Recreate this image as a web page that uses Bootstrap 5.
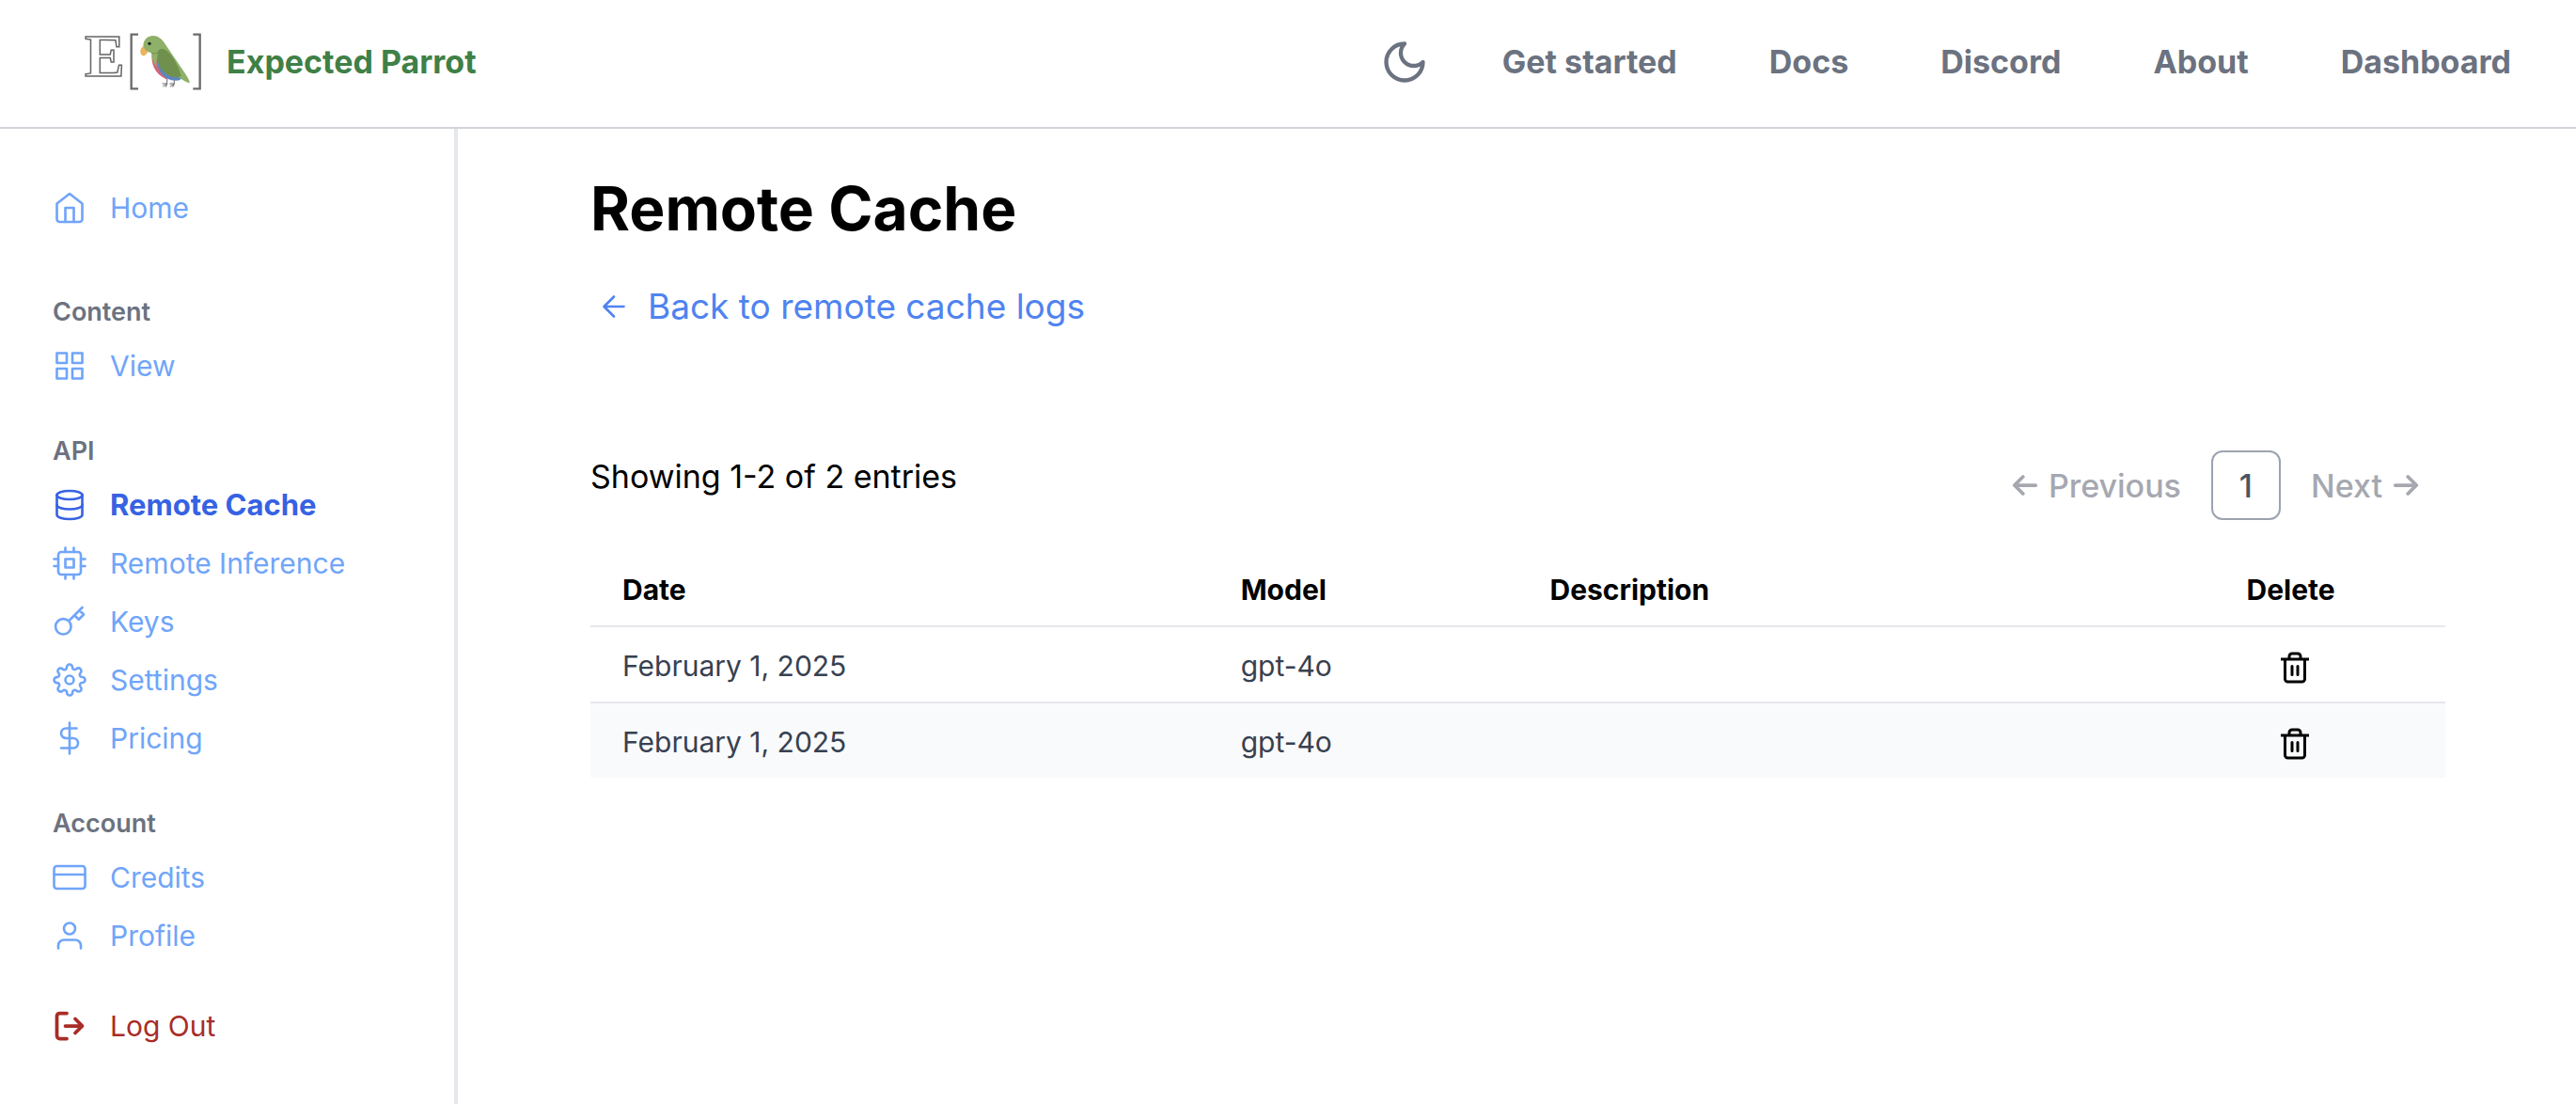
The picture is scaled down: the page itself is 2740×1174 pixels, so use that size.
<!DOCTYPE html>
<html lang="en">
<head>
<meta charset="utf-8">
<meta name="viewport" content="width=device-width, initial-scale=1">
<title>Remote Cache - Expected Parrot</title>
<link href="https://cdn.jsdelivr.net/npm/bootstrap@5.3.0/dist/css/bootstrap.min.css" rel="stylesheet">
<style>
  body { font-family: Inter, "Liberation Sans", sans-serif; color: #000; background: #fff; min-height: 100vh; }
  a { text-decoration: none; }
  .ico { width: 36px; height: 36px; flex: none; fill: none; stroke: currentColor; stroke-width: 1.75; stroke-linecap: round; stroke-linejoin: round; }
  .site-header { height: 137px; border-bottom: 2px solid #d1d5db; padding: 0 69px 4px 90px; }
  .brand-link { color: #3f8046; font-size: 34px; font-weight: 700; gap: 27px; }
  .brand-logo { width: 124px; height: 88px; flex: none; }
  .top-links { gap: 98px; font-size: 34px; font-weight: 700; }
  .top-links a { color: #6b7280; }
  .theme-btn { color: #6b7280; margin-right: -20px; }
  .theme-btn .ico { width: 52px; height: 52px; stroke-width: 2; }
  .side { width: 487px; flex: none; border-right: 4px solid #e5e7eb; padding: 53px 32px 32px 56px; }
  .side a, .side button { display: flex; align-items: center; gap: 25px; height: 62px; font-size: 30px; line-height: 40px; color: #70a5f9; }
  .side h2 { font-size: 27px; line-height: 32px; font-weight: 600; color: #6b7280; margin: 44px 0 10px; }
  .side h2.first-group { margin-top: 64px; }
  .side a.current { color: #3662e3; font-weight: 700; font-size: 31px; }
  .side .logout { color: #a82c27; margin-top: 34px; }
  .side .logout .ico { stroke-width: 2.5; }
  .main-area { padding: 49px 139px 48px 141px; }
  .main-area h1 { font-size: 64px; line-height: 72px; font-weight: 700; margin: 0; }
  .back-link { color: #4f83f0; font-size: 37px; line-height: 48px; margin: 44px 0 0 7px; gap: 18px; }
  .list-head { margin-top: 129px; }
  .entry-count { font-size: 34px; line-height: 56px; }
  .pager { font-size: 34px; font-weight: 500; gap: 32px; color: #a5a8b0; margin-right: 24px; }
  .pager button { color: #a5a8b0; gap: 7px; }
  .pager .ico { stroke-width: 2.5; }
  .pager .page-now { width: 74px; height: 74px; border: 2px solid #9ca3af; border-radius: 12px; color: #4b5563; }
  .entries { margin: 34px 0 0; font-size: 30px; line-height: 40px; table-layout: fixed; width: 100%; }
  .entries th { padding: 20px 34px 18px; border-bottom: 2px solid #e5e7eb; font-weight: 700; }
  .entries td { padding: 21px 34px 18px; color: #374151; }
  .entries tbody tr + tr td { border-top: 2px solid #e5e7eb; background: #f9fafb; }
  .w-third { width: 33.333%; } .w-sixth { width: 16.667%; }
  .plain-btn { background: none; border: 0; padding: 0; font-weight: inherit; }
  .del-btn { display: block; height: 40px; margin: 0 auto; padding: 4px 0 0 8px; color: #000; }
  .del-btn .ico { display: block; stroke-width: 2; stroke-linecap: butt; }
</style>
</head>
<body class="d-flex flex-column">
<header class="site-header d-flex align-items-center justify-content-between">
  <a class="brand-link d-flex align-items-center" href="#">
    <svg class="brand-logo" viewBox="0 -12 124 88" aria-hidden="true">
      <text x="0" y="47" font-family="Liberation Serif, serif" font-size="64" fill="none" stroke="#666" stroke-width="1.5">E</text>
      <g transform="translate(-6 -6) scale(.3333)" fill="none">
        <path d="M189 26H167V199H189M364 26H386V199H364" stroke="#6b6b6b" stroke-width="7"/>
        <path d="M281 168V184L268 192M281 184L277 194M266 183H281M304 168V184L291 192M304 184L299 194M289 183H304" stroke="#666" stroke-width="3"/>
        <path d="M233 84C229 118 240 150 277 168L300 165L262 84Z" fill="#d2647a"/>
        <path d="M251 98C244 138 272 180 322 172L330 160L262 84Z" fill="#5b87c0"/>
        <path d="M212 60C198 64 192 78 199 90C202 95 208 95 211 92C216 86 222 86 220 72Z" fill="#e9b45c"/>
        <path d="M205 60C207 41 220 30 236 30C257 30 268 45 279 62L310 108L333 142C343 157 351 169 354 180C347 181 337 175 326 168L300 145L252 95C248 105 246 113 248 130C238 119 232 104 232 85C221 83 208 76 205 60Z" fill="#8fb068"/>
        <path d="M251 84C252 73 264 68 277 76C298 90 317 124 326 158C311 167 287 162 270 145C255 130 248 108 251 84Z" fill="#70914d"/>
        <path d="M230 84Q241 91 252 83" stroke="#70914d" stroke-width="3"/>
        <circle cx="225" cy="55" r="5" fill="#222"/>
      </g>
    </svg>
    <span>Expected Parrot</span>
  </a>
  <nav class="top-links d-flex align-items-center">
    <button class="plain-btn theme-btn d-flex" type="button" aria-label="Dark mode"><svg class="ico" viewBox="0 0 24 24"><path d="M12 3a6 6 0 0 0 9 9 9 9 0 1 1-9-9Z"/></svg></button>
    <a href="#">Get started</a><a href="#">Docs</a><a href="#">Discord</a><a href="#">About</a><a href="#">Dashboard</a>
  </nav>
</header>
<div class="d-flex flex-grow-1">
  <aside class="side">
    <a href="#"><svg class="ico" viewBox="0 0 24 24"><path d="M3 9l9-7 9 7v11a2 2 0 0 1-2 2H5a2 2 0 0 1-2-2z"/><path d="M9 22V12h6v10"/></svg>Home</a>
    <h2 class="first-group">Content</h2>
    <a href="#"><svg class="ico" viewBox="0 0 24 24"><path d="M3 3h7v7H3zM14 3h7v7h-7zM14 14h7v7h-7zM3 14h7v7H3z"/></svg>View</a>
    <h2>API</h2>
    <a class="current" href="#"><svg class="ico" viewBox="0 0 24 24"><ellipse cx="12" cy="5" rx="9" ry="3"/><path d="M21 12c0 1.660-4 3-9 3s-9-1.340-9-3"/><path d="M3 5v14c0 1.660 4 3 9 3s9-1.340 9-3V5"/></svg>Remote Cache</a>
    <a href="#"><svg class="ico" viewBox="0 0 24 24"><rect x="4" y="4" width="16" height="16" rx="2"/><path d="M9 9h6v6H9zM9 1v3M15 1v3M9 20v3M15 20v3M20 9h3M20 14h3M1 9h3M1 14h3"/></svg>Remote Inference</a>
    <a href="#"><svg class="ico" viewBox="0 0 24 24"><path d="M21 2l-2 2m-7.610 7.610a5.500 5.500 0 1 1-7.778 7.778 5.500 5.500 0 0 1 7.777-7.777zm0 0L15.500 7.500m0 0l3 3L22 7l-3-3m-3.500 3.500L19 4"/></svg>Keys</a>
    <a href="#"><svg class="ico" viewBox="0 0 24 24"><circle cx="12" cy="12" r="3"/><path d="M19.400 15a1.650 1.650 0 0 0 .33 1.820l.06.06a2 2 0 0 1 0 2.830 2 2 0 0 1-2.830 0l-.06-.06a1.650 1.650 0 0 0-1.820-.33 1.650 1.650 0 0 0-1 1.510V21a2 2 0 0 1-2 2 2 2 0 0 1-2-2v-.09A1.650 1.650 0 0 0 9 19.400a1.650 1.650 0 0 0-1.820.33l-.06.06a2 2 0 0 1-2.830 0 2 2 0 0 1 0-2.830l.06-.06a1.650 1.650 0 0 0 .33-1.820 1.650 1.650 0 0 0-1.510-1H3a2 2 0 0 1-2-2 2 2 0 0 1 2-2h.09A1.650 1.650 0 0 0 4.600 9a1.650 1.650 0 0 0-.33-1.820l-.06-.06a2 2 0 0 1 0-2.830 2 2 0 0 1 2.830 0l.06.06a1.650 1.650 0 0 0 1.820.33H9a1.650 1.650 0 0 0 1-1.510V3a2 2 0 0 1 2-2 2 2 0 0 1 2 2v.09a1.650 1.650 0 0 0 1 1.510 1.650 1.650 0 0 0 1.820-.33l.06-.06a2 2 0 0 1 2.830 0 2 2 0 0 1 0 2.830l-.06.06a1.650 1.650 0 0 0-.33 1.820V9a1.650 1.650 0 0 0 1.510 1H21a2 2 0 0 1 2 2 2 2 0 0 1-2 2h-.09a1.650 1.650 0 0 0-1.510 1z"/></svg>Settings</a>
    <a href="#"><svg class="ico" viewBox="0 0 24 24"><path d="M12 1v22M17 5H9.500a3.500 3.500 0 0 0 0 7h5a3.500 3.500 0 0 1 0 7H6"/></svg>Pricing</a>
    <h2>Account</h2>
    <a href="#"><svg class="ico" viewBox="0 0 24 24"><rect x="1" y="4" width="22" height="16" rx="2"/><path d="M1 10h22"/></svg>Credits</a>
    <a href="#"><svg class="ico" viewBox="0 0 24 24"><path d="M20 21v-2a4 4 0 0 0-4-4H8a4 4 0 0 0-4 4v2"/><circle cx="12" cy="7" r="4"/></svg>Profile</a>
    <button class="plain-btn logout" type="button"><svg class="ico" viewBox="0 0 24 24"><path d="M10 3H5a2 2 0 0 0-2 2v14a2 2 0 0 0 2 2h5M16 17l5-5-5-5M21 12H9"/></svg>Log Out</button>
  </aside>
  <main class="main-area flex-grow-1">
    <h1>Remote Cache</h1>
    <a class="back-link d-inline-flex align-items-center" href="#"><svg class="ico" viewBox="0 0 24 24"><path d="M19 12H5M12 19l-7-7 7-7"/></svg>Back to remote cache logs</a>
    <div class="list-head d-flex justify-content-between align-items-start">
      <div class="entry-count">Showing 1-2 of 2 entries</div>
      <div class="pager d-flex align-items-center">
        <button class="plain-btn d-flex align-items-center" type="button" disabled><svg class="ico" viewBox="0 0 24 24"><path d="M19.500 12h-15M10.500 18l-6-6 6-6"/></svg>Previous</button>
        <button class="plain-btn page-now" type="button" aria-current="page">1</button>
        <button class="plain-btn d-flex align-items-center" type="button" disabled>Next<svg class="ico" viewBox="0 0 24 24"><path d="M4.500 12h15M13.500 18l6-6-6-6"/></svg></button>
      </div>
    </div>
    <table class="entries">
      <thead><tr><th class="w-third">Date</th><th class="w-sixth">Model</th><th class="w-third">Description</th><th class="w-sixth text-center">Delete</th></tr></thead>
      <tbody>
        <tr><td>February 1, 2025</td><td>gpt-4o</td><td></td><td><button class="plain-btn del-btn" type="button" aria-label="Delete entry"><svg class="ico" viewBox="0 0 24 24"><path d="M2 6h20M19 6v14a2 2 0 0 1-2 2H7a2 2 0 0 1-2-2V6m3 0V4a2 2 0 0 1 2-2h4a2 2 0 0 1 2 2v2"/><path stroke-linecap="round" d="M10 11v6M14 11v6"/></svg></button></td></tr>
        <tr><td>February 1, 2025</td><td>gpt-4o</td><td></td><td><button class="plain-btn del-btn" type="button" aria-label="Delete entry"><svg class="ico" viewBox="0 0 24 24"><path d="M2 6h20M19 6v14a2 2 0 0 1-2 2H7a2 2 0 0 1-2-2V6m3 0V4a2 2 0 0 1 2-2h4a2 2 0 0 1 2 2v2"/><path stroke-linecap="round" d="M10 11v6M14 11v6"/></svg></button></td></tr>
      </tbody>
    </table>
  </main>
</div>
<script src="https://cdn.jsdelivr.net/npm/bootstrap@5.3.0/dist/js/bootstrap.bundle.min.js"></script>
</body>
</html>
